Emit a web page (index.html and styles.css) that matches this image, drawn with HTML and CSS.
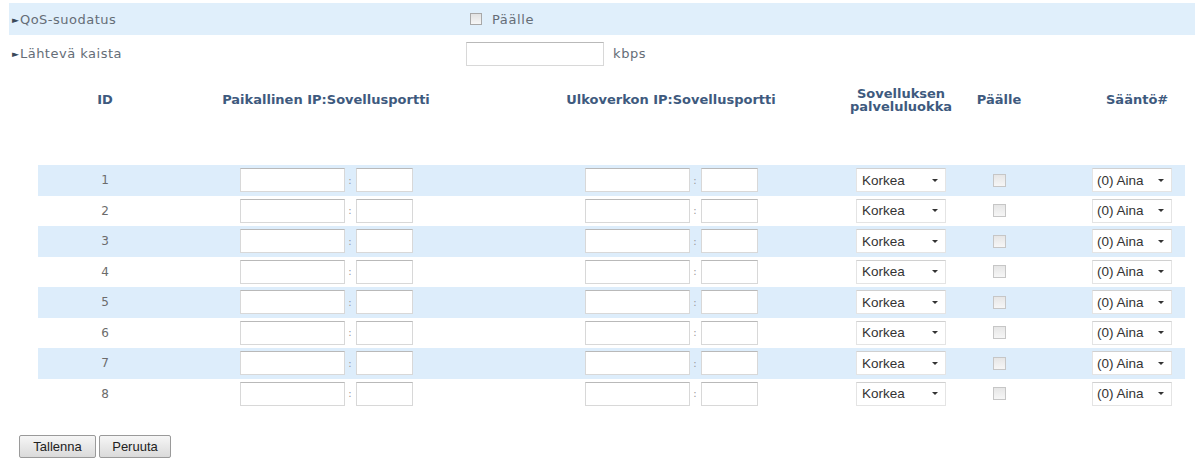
FILE: index.html
```html
<!DOCTYPE html>
<html lang="fi">
<head>
<meta charset="utf-8">
<title>QoS</title>
<link rel="stylesheet" href="styles.css">
</head>
<body>
<div class="page">
  <div class="setting band">
    <div class="label"><span class="tri">&#9658;</span>QoS-suodatus</div>
    <div class="control"><span class="check"></span><span class="unit">Päälle</span></div>
  </div>
  <div class="setting">
    <div class="label"><span class="tri">&#9658;</span>Lähtevä kaista</div>
    <div class="control"><span class="field wide"></span><span class="unit kbps">kbps</span></div>
  </div>

  <div class="rules">
    <div class="row head">
      <div class="c id">ID</div>
      <div class="c ip">Paikallinen IP:Sovellusportti</div>
      <div class="c ip remote">Ulkoverkon IP:Sovellusportti</div>
      <div class="c cls">Sovelluksen<br>palveluluokka</div>
      <div class="c on">Päälle</div>
      <div class="c rule">Sääntö#</div>
    </div>
    <div id="rows"></div>
  </div>

  <div class="actions">
    <button class="btn">Tallenna</button>
    <button class="btn">Peruuta</button>
  </div>
</div>
<script src="app.js"></script>
</body>
</html>
```

FILE: styles.css
```css
html, body {
  margin: 0;
  padding: 0;
  background: #fff;
}
body {
  font-family: "DejaVu Sans", Verdana, sans-serif;
  font-size: 12px;
  color: #555;
}
.page {
  width: 1195px;
  padding-top: 3px;
}
.setting {
  display: flex;
  align-items: center;
  height: 32px;
  margin-left: 9px;
}
.setting.band {
  background: #e0effb;
}
.setting + .setting {
  margin-top: 5px;
  height: 27px;
}
.label {
  width: 457px;
  padding-left: 3px;
  box-sizing: border-box;
  color: #656d77;
  font-size: 13px;
  letter-spacing: 0.5px;
}
.tri {
  font-size: 9px;
  color: #3a4a5a;
  margin-right: 1px;
  letter-spacing: 0;
  position: relative;
  top: -1px;
}
.control {
  display: flex;
  align-items: center;
}
.check {
  display: inline-block;
  width: 12px;
  height: 12px;
  border: 1px solid #a8a8a8;
  background: linear-gradient(#e2e2e2, #f6f6f6);
  box-sizing: border-box;
}
.setting.band .check {
  margin-left: 4px;
}
.unit {
  margin-left: 10px;
  color: #656d77;
  font-size: 13px;
  letter-spacing: 0.6px;
}
.unit.kbps {
  margin-left: 9px;
}
.field {
  display: inline-block;
  height: 24px;
  background: #fff;
  border: 1px solid #d8d8d8;
  border-top-color: #b9b9b9;
  box-sizing: border-box;
}
.field.wide {
  width: 138px;
}

/* rule table */
.rules {
  margin-top: 12px;
  margin-left: 38px;
  width: 1147px;
}
.row {
  display: grid;
  grid-template-columns: 134px 308px 376px 90px 106px 133px;
  align-items: center;
  height: 30.5px;
}
.row.head {
  height: 41px;
  margin-bottom: 45px;
  color: #3e5a7e;
  font-weight: bold;
  font-size: 13px;
  line-height: 13px;
}
#rows .row:nth-child(odd) {
  background: #ddedfb;
}
.c {
  display: flex;
  justify-content: center;
  align-items: center;
  text-align: center;
}
.c.remote {
  padding-left: 6px;
}
.c.rule {
  justify-content: flex-start;
  padding-left: 40px;
}
.row.head .c.rule {
  padding-left: 54px;
}
.row:not(.head) .c.id {
  color: #6b6b6b;
}
.pair {
  display: flex;
  align-items: center;
}
.pair .ipf {
  width: 105px;
}
.pair .port {
  width: 57px;
}
.sep {
  width: 11px;
  text-align: center;
  color: #999;
  font-size: 10px;
}
.select {
  display: flex;
  align-items: center;
  justify-content: space-between;
  height: 24px;
  background: #fff;
  border: 1px solid #e4e4e4;
  border-top-color: #d0d0d0;
  box-sizing: border-box;
  padding: 0 7px 0 5px;
  font-family: "Liberation Sans", Arial, sans-serif;
  font-size: 13.5px;
  color: #333;
}
.select.cls {
  width: 90px;
}
.select.rl {
  width: 80px;
  padding-left: 4px;
}
.arrow {
  width: 0;
  height: 0;
  border-left: 3px solid transparent;
  border-right: 3px solid transparent;
  border-top: 3px solid #333;
}
.c.on .check {
  width: 13px;
  height: 13px;
  border-color: #c6c6c6;
  background: linear-gradient(#e6e6e6, #f6f6f6);
}

.actions {
  display: flex;
  gap: 3px;
  margin-top: 26px;
  margin-left: 19px;
}
.btn {
  height: 23px;
  padding: 0 4px;
  font-family: "Liberation Sans", Arial, sans-serif;
  font-size: 13px;
  color: #222;
  background: linear-gradient(#f6f6f6, #dadada);
  border: 1px solid #9a9a9a;
  border-radius: 2px;
}
.btn:first-child {
  width: 77px;
}
.btn:last-child {
  width: 72px;
}
```

FILE: app.js
```js
// Build the eight QoS rule rows.
const rows = document.getElementById('rows');
for (let i = 1; i <= 8; i++) {
  const row = document.createElement('div');
  row.className = 'row';
  row.innerHTML = `
    <div class="c id">${i}</div>
    <div class="c ip"><div class="pair"><span class="field ipf"></span><span class="sep">:</span><span class="field port"></span></div></div>
    <div class="c ip remote"><div class="pair"><span class="field ipf"></span><span class="sep">:</span><span class="field port"></span></div></div>
    <div class="c cls"><div class="select cls">Korkea<span class="arrow"></span></div></div>
    <div class="c on"><span class="check"></span></div>
    <div class="c rule"><div class="select rl">(0) Aina<span class="arrow"></span></div></div>`;
  rows.appendChild(row);
}
```
